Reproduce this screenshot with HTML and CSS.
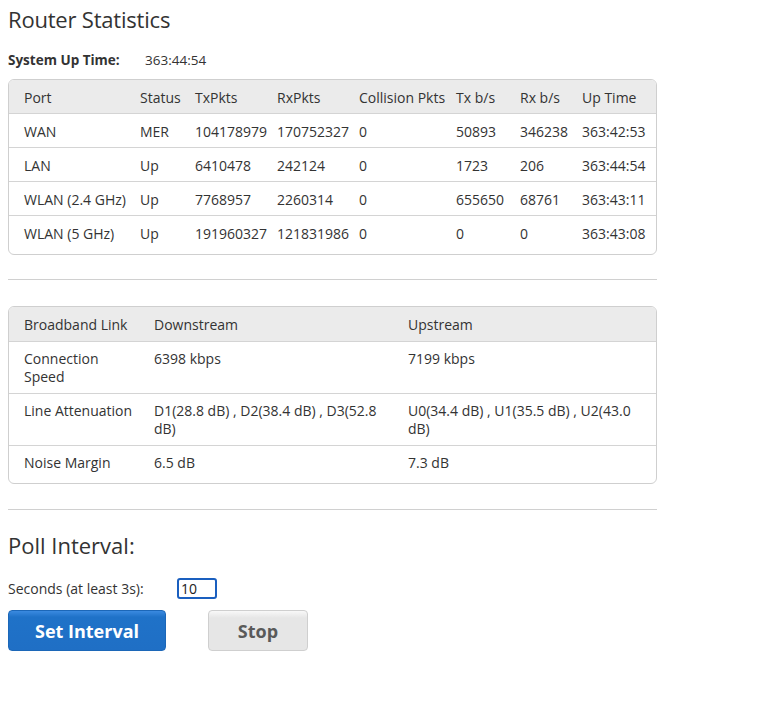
FILE: index.html
```html
<!DOCTYPE html>
<html>
<head>
<meta charset="utf-8">
<link rel="stylesheet" href="styles.css">
</head>
<body>
<h1 class="title">Router Statistics</h1>
<div class="uptime"><span class="uptime-label">System Up Time:</span><span class="uptime-value">363:44:54</span></div>

<div class="panel">
<table class="stats ports">
<colgroup>
<col class="c1"><col class="c2"><col class="c3"><col class="c4"><col class="c5"><col class="c6"><col class="c7"><col class="c8">
</colgroup>
<thead>
<tr><th>Port</th><th>Status</th><th>TxPkts</th><th>RxPkts</th><th>Collision Pkts</th><th>Tx b/s</th><th>Rx b/s</th><th>Up Time</th></tr>
</thead>
<tbody>
<tr><td>WAN</td><td>MER</td><td>104178979</td><td>170752327</td><td>0</td><td>50893</td><td>346238</td><td>363:42:53</td></tr>
<tr><td>LAN</td><td>Up</td><td>6410478</td><td>242124</td><td>0</td><td>1723</td><td>206</td><td>363:44:54</td></tr>
<tr><td>WLAN (2.4 GHz)</td><td>Up</td><td>7768957</td><td>2260314</td><td>0</td><td>655650</td><td>68761</td><td>363:43:11</td></tr>
<tr><td>WLAN (5 GHz)</td><td>Up</td><td>191960327</td><td>121831986</td><td>0</td><td>0</td><td>0</td><td>363:43:08</td></tr>
</tbody>
</table>
</div>

<hr class="rule">

<div class="panel">
<table class="stats link">
<colgroup>
<col class="l1"><col class="l2"><col class="l3">
</colgroup>
<thead>
<tr><th>Broadband Link</th><th>Downstream</th><th>Upstream</th></tr>
</thead>
<tbody>
<tr><td>Connection Speed</td><td>6398 kbps</td><td>7199 kbps</td></tr>
<tr><td>Line Attenuation</td><td>D1(28.8 dB) , D2(38.4 dB) , D3(52.8 dB)</td><td>U0(34.4 dB) , U1(35.5 dB) , U2(43.0 dB)</td></tr>
<tr><td>Noise Margin</td><td>6.5 dB</td><td>7.3 dB</td></tr>
</tbody>
</table>
</div>

<hr class="rule rule2">

<h2 class="subtitle">Poll Interval:</h2>
<div class="poll-row">
<label class="poll-label" for="secs">Seconds (at least 3s):</label>
<input id="secs" class="poll-input" type="text" value="10">
</div>
<div class="buttons">
<button class="btn btn-primary">Set Interval</button>
<button class="btn btn-secondary">Stop</button>
</div>
</body>
</html>
```
FILE: styles.css
```css
html, body {
  background: #fff;
}
body {
  margin: 8px;
  font-family: "Open Sans", "Noto Sans", sans-serif;
  font-size: 14px;
  color: #333;
  width: 649px;
}
.title {
  margin: 0;
  font-size: 22px;
  font-weight: 400;
  line-height: 22px;
  color: #333;
  letter-spacing: -0.2px;
}
.uptime {
  display: flex;
  margin-top: 20px;
  font-size: 13.5px;
  line-height: 20px;
}
.uptime-label {
  font-weight: 700;
  width: 137px;
}
.panel {
  margin-top: 9px;
  border: 1px solid #cfcfcf;
  border-radius: 6px;
  overflow: hidden;
}
.stats {
  width: 100%;
  border-collapse: collapse;
  table-layout: fixed;
}
.stats th {
  background: #ebebeb;
  font-weight: 400;
  text-align: left;
  padding: 8px 0 6px 0;
  line-height: 19px;
  border-bottom: 1px solid #d4d4d4;
}
.stats td {
  padding: 8px 0 6px;
  line-height: 19px;
  vertical-align: top;
  border-bottom: 1px solid #d4d4d4;
}
.stats tbody tr:last-child td {
  border-bottom: none;
}
.stats th:first-child, .stats td:first-child {
  padding-left: 15px;
}
.ports td {
  white-space: nowrap;
}
.ports tbody tr:last-child td {
  padding-bottom: 11px;
}
.c1 { width: 131px; }
.c2 { width: 55px; }
.c3 { width: 82px; }
.c4 { width: 82px; }
.c5 { width: 97px; }
.c6 { width: 64px; }
.c7 { width: 62px; }
.c8 { width: 74px; }

.link th {
  padding-top: 8px;
  padding-bottom: 7px;
}
.link td {
  line-height: 18px;
  padding-top: 8px;
  padding-bottom: 7px;
}
.link th:first-child, .link td:first-child {
  padding-right: 20px;
}
.link tbody tr:last-child td {
  padding-bottom: 11px;
}
.link td:nth-child(2), .link td:nth-child(3) {
  padding-right: 12px;
}
.l1 { width: 145px; }
.l2 { width: 254px; }
.l3 { width: auto; }

.rule {
  border: none;
  border-top: 1px solid #d0d0d0;
  margin: 24px 0 26px;
  height: 0;
}
.rule2 {
  margin-top: 25px;
  margin-bottom: 0;
}
.subtitle {
  margin: 23px 0 0;
  font-size: 22px;
  font-weight: 400;
  line-height: 24px;
  color: #333;
}
.poll-row {
  display: flex;
  align-items: center;
  margin-top: 21px;
}
.poll-label {
  width: 169px;
}
.poll-input {
  width: 32px;
  height: 15px;
  padding: 1px 2px;
  border: 2px solid #1a5fbf;
  border-radius: 3px;
  font-family: "Open Sans", sans-serif;
  font-size: 14px;
  color: #222;
  outline: none;
}
.buttons {
  display: flex;
  gap: 42px;
  margin-top: 11px;
}
.btn {
  height: 41px;
  border-radius: 4px;
  font-family: "Open Sans", sans-serif;
  font-size: 18px;
  font-weight: 700;
  cursor: pointer;
}
.btn-primary {
  width: 158px;
  color: #fff;
  border: 1px solid #1c67b8;
  background: linear-gradient(#3a8ae0 0, #1f72c8 6px, #1f6fc5 100%);
}
.btn-secondary {
  width: 100px;
  color: #5a5a5a;
  border: 1px solid #cfcfcf;
  background: linear-gradient(#f8f8f8 0, #e6e6e6 7px, #e6e6e6 100%);
}
```
